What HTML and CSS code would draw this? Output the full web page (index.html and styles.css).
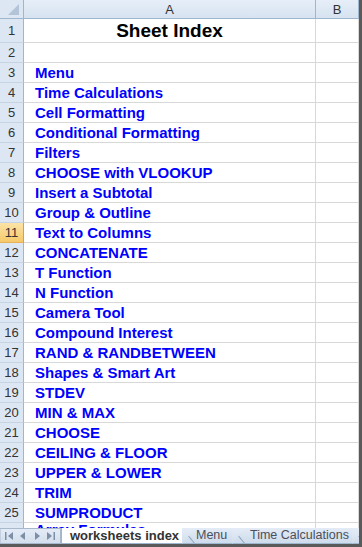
FILE: index.html
```
<!DOCTYPE html>
<html lang="en">
<head>
    <meta charset="UTF-8">
    <link rel="stylesheet" href="styles.css">
</head>
<body>
    <div class="window">
        <div class="sheet">
            <!-- column headers -->
            <div class="row head">
                <div class="corner"><span class="tri"></span></div>
                <div class="col">A</div>
                <div class="col">B</div>
            </div>
            <div class="row title-row">
                <div class="num">1</div>
                <div class="cell title">Sheet Index</div>
                <div class="cell"></div>
            </div>
            <div class="row"><div class="num">2</div><div class="cell"></div><div class="cell"></div></div>
            <div class="row"><div class="num">3</div><div class="cell link">Menu</div><div class="cell"></div></div>
            <div class="row"><div class="num">4</div><div class="cell link">Time Calculations</div><div class="cell"></div></div>
            <div class="row"><div class="num">5</div><div class="cell link">Cell Formatting</div><div class="cell"></div></div>
            <div class="row"><div class="num">6</div><div class="cell link">Conditional Formatting</div><div class="cell"></div></div>
            <div class="row"><div class="num">7</div><div class="cell link">Filters</div><div class="cell"></div></div>
            <div class="row"><div class="num">8</div><div class="cell link">CHOOSE with VLOOKUP</div><div class="cell"></div></div>
            <div class="row"><div class="num">9</div><div class="cell link">Insert a Subtotal</div><div class="cell"></div></div>
            <div class="row"><div class="num">10</div><div class="cell link">Group &amp; Outline</div><div class="cell"></div></div>
            <div class="row"><div class="num selected">11</div><div class="cell link">Text to Columns</div><div class="cell"></div></div>
            <div class="row"><div class="num">12</div><div class="cell link">CONCATENATE</div><div class="cell"></div></div>
            <div class="row"><div class="num">13</div><div class="cell link">T Function</div><div class="cell"></div></div>
            <div class="row"><div class="num">14</div><div class="cell link">N Function</div><div class="cell"></div></div>
            <div class="row"><div class="num">15</div><div class="cell link">Camera Tool</div><div class="cell"></div></div>
            <div class="row"><div class="num">16</div><div class="cell link">Compound Interest</div><div class="cell"></div></div>
            <div class="row"><div class="num">17</div><div class="cell link">RAND &amp; RANDBETWEEN</div><div class="cell"></div></div>
            <div class="row"><div class="num">18</div><div class="cell link">Shapes &amp; Smart Art</div><div class="cell"></div></div>
            <div class="row"><div class="num">19</div><div class="cell link">STDEV</div><div class="cell"></div></div>
            <div class="row"><div class="num">20</div><div class="cell link">MIN &amp; MAX</div><div class="cell"></div></div>
            <div class="row"><div class="num">21</div><div class="cell link">CHOOSE</div><div class="cell"></div></div>
            <div class="row"><div class="num">22</div><div class="cell link">CEILING &amp; FLOOR</div><div class="cell"></div></div>
            <div class="row"><div class="num">23</div><div class="cell link">UPPER &amp; LOWER</div><div class="cell"></div></div>
            <div class="row"><div class="num">24</div><div class="cell link">TRIM</div><div class="cell"></div></div>
            <div class="row"><div class="num">25</div><div class="cell link">SUMPRODUCT</div><div class="cell"></div></div>
            <div class="row"><div class="num"></div><div class="cell link peek">Array Formulas</div><div class="cell"></div></div>
        </div>

        <!-- sheet tabs -->
        <div class="tabbar">
            <div class="nav">
                <svg width="61" height="16" viewBox="0 0 61 16">
                    <g fill="#7d8fa6">
                        <rect x="5" y="4" width="1.5" height="8"/>
                        <path d="M13 4 L8 8 L13 12 Z"/>
                        <path d="M25 4 L20 8 L25 12 Z"/>
                        <path d="M35 4 L40 8 L35 12 Z"/>
                        <path d="M47 4 L52 8 L47 12 Z"/>
                        <rect x="53.5" y="4" width="1.5" height="8"/>
                    </g>
                    <rect x="0" y="0.5" width="60.5" height="15" fill="none" stroke="#a9b9cd"/>
                </svg>
            </div>
            <div class="tab active">worksheets index</div>
            <div class="tab menu">Menu</div>
            <div class="tab time">Time Calculations</div>
            <div class="tab tail"></div>
        </div>
    </div>
</body>
</html>
```
FILE: styles.css
```
body {
    margin: 0;
    background: #ffffff;
    font-family: "Liberation Sans", Arial, sans-serif;
}

.window {
    width: 359px;
    height: 544px;
    border-right: 3px solid #5a5a5a;
    border-bottom: 3px solid #5a5a5a;
    display: flex;
    flex-direction: column;
    overflow: hidden;
}

.sheet {
    height: 528px;
    flex: none;
    overflow: hidden;
    background: #ffffff;
}

.row {
    display: grid;
    grid-template-columns: 24px 292px 1fr;
    height: 20px;
}

.row.head {
    height: 19px;
}

.row.title-row {
    height: 24px;
}

/* Headers */
.corner, .col, .num {
    background: #dde7f3;
    color: #333333;
    border-right: 1px solid #9eb6ce;
    border-bottom: 1px solid #9eb6ce;
    display: flex;
    align-items: center;
    justify-content: center;
    box-sizing: border-box;
}

.corner {
    position: relative;
}

.corner .tri {
    position: absolute;
    right: 4px;
    bottom: 3px;
    width: 0;
    height: 0;
    border-left: 11px solid transparent;
    border-bottom: 11px solid #b3c4d8;
}

.col {
    background: linear-gradient(#e6eef8, #d7e3f1);
    font-size: 13px;
    padding-top: 1px;
}

.num {
    border-bottom-color: #c5d3e3;
    font-size: 13px;
}

.num.selected {
    background: linear-gradient(#fbe3a7, #f6c96a);
    border-right: 1px solid #f29536;
    border-bottom-color: #e9b15a;
}

/* Cells */
.cell {
    border-right: 1px solid #d8d8d8;
    border-bottom: 1px solid #d8d8d8;
    box-sizing: border-box;
    white-space: nowrap;
    overflow: hidden;
}

.cell.title {
    text-align: center;
    font-weight: bold;
    font-size: 19px;
    color: #000000;
    line-height: 23px;
}

.cell.link {
    color: #0000ff;
    font-weight: bold;
    font-size: 15px;
    line-height: 19px;
    padding-left: 11px;
}

.cell.link.peek {
    line-height: 14px;
}

/* Sheet tabs */
.tabbar {
    height: 16px;
    flex: none;
    display: flex;
    background: linear-gradient(#e4ecf7, #d3deec);
    font-size: 13px;
}

.nav {
    height: 16px;
    width: 61px;
    flex: none;
}

.tab {
    height: 16px;
    line-height: 15px;
    color: #4a4f5a;
    font-size: 12.5px;
    background:
        linear-gradient(to top right, transparent calc(50% - 1px), #8ea5c2 50%, transparent calc(50% + 1px)) left top / 13px 16px no-repeat,
        linear-gradient(#e3ebf6, #cfdcec);
    border-bottom: 1px solid #9eb6ce;
    box-sizing: border-box;
    white-space: nowrap;
    clip-path: polygon(13px 0, 100% 0, 100% 100%, 0 100%);
    flex: none;
}

.tab.active {
    width: 121px;
    background: #ffffff;
    font-weight: bold;
    font-size: 13px;
    color: #333333;
    padding-left: 8px;
    clip-path: none;
    border-left: 1px solid #9eb6ce;
}

.tab.menu {
    width: 50px;
    padding-left: 14px;
}

.tab.time {
    width: 120px;
    padding-left: 18px;
}

.tab.tail {
    width: 14px;
}
```
